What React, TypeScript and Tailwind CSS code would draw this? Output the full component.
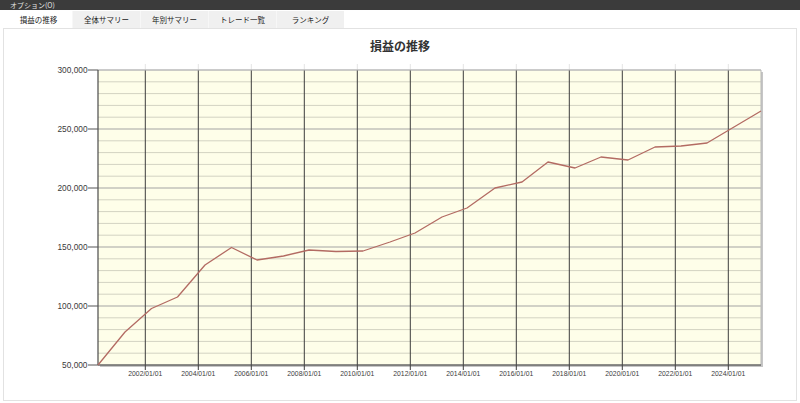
import * as React from 'react';

const tabs = ['損益の推移', '全体サマリー', '年別サマリー', 'トレード一覧', 'ランキング'];

// plot area in page pixels
const L = 98;
const T = 70;
const R = 761;
const B = 365;

const yOf = (v: number) => B - ((v - 50000) / 250000) * (B - T);

const yLabels = [300000, 250000, 200000, 150000, 100000, 50000];
const years = ['2002', '2004', '2006', '2008', '2010', '2012', '2014', '2016', '2018', '2020', '2022', '2024'];
const xOfYear = (i: number) => 145.3 + 53 * i;

const points: Array<[number, number]> = [
  [98, 365], [125, 332], [151.5, 308.5], [177.5, 297], [205, 265], [231.5, 247.5],
  [257, 260], [283.5, 256], [309, 250], [336, 251.5], [363, 251], [390, 242],
  [415, 233], [442, 217], [467, 208], [495, 188], [522, 182], [548, 162],
  [575, 168], [601, 157], [628, 160], [655, 147], [681, 146], [707, 143],
  [734, 127], [761, 111],
];

const axisFont = '"Liberation Sans", Arial, sans-serif';

function ProfitChart() {
  const minor = Array.from({ length: 26 }, (_, k) => 50000 + k * 10000);
  return (
    <svg width={792} height={337} viewBox="4 58 792 337" className="block">
      {/* shadow */}
      <rect x={L + 2} y={T + 2} width={R - L} height={B - T} fill="#c6c6c6" />
      <rect x={L} y={T} width={R - L} height={B - T} fill="#fefee9" />

      {/* faint top ticks */}
      {years.map((_, i) => (
        <line key={'tt' + i} x1={xOfYear(i)} x2={xOfYear(i)} y1={T - 6} y2={T} stroke="#e4e4e4" strokeWidth={1} />
      ))}

      {/* minor horizontal grid */}
      {minor.map((v) =>
        v % 50000 === 0 ? null : (
          <line key={'m' + v} x1={L} x2={R} y1={yOf(v)} y2={yOf(v)} stroke="#d3d3c2" strokeWidth={1} />
        )
      )}
      {/* major horizontal grid */}
      {yLabels.map((v) => (
        <line key={'M' + v} x1={L} x2={R} y1={yOf(v)} y2={yOf(v)} stroke="#a4a4a4" strokeWidth={1.2} />
      ))}

      {/* vertical grid */}
      {years.map((_, i) => (
        <line key={'v' + i} x1={xOfYear(i)} x2={xOfYear(i)} y1={T} y2={B + 5} stroke="#3c3c3c" strokeWidth={1} />
      ))}

      {/* frame */}
      <line x1={L} x2={R} y1={T} y2={T} stroke="#c4c4c4" strokeWidth={1} />
      <line x1={R} x2={R} y1={T} y2={B} stroke="#b8b8b8" strokeWidth={1} />
      <line x1={L} x2={L} y1={T} y2={B} stroke="#4a4a4a" strokeWidth={1.2} />
      <line x1={L} x2={R} y1={B} y2={B} stroke="#4a4a4a" strokeWidth={1.2} />

      {/* y ticks and labels */}
      {yLabels.map((v) => (
        <g key={'yl' + v}>
          <line x1={L - 10} x2={L} y1={yOf(v)} y2={yOf(v)} stroke="#555" strokeWidth={1} />
          <text
            x={L - 10.5}
            y={yOf(v) + 3}
            textAnchor="end"
            fontSize={8.3}
            fill="#3a3a3a"
            fontFamily={axisFont}
          >
            {v.toLocaleString('en-US')}
          </text>
        </g>
      ))}

      {/* x labels */}
      {years.map((y, i) => (
        <text
          key={'xl' + y}
          x={xOfYear(i)}
          y={376}
          textAnchor="middle"
          fontSize={7.5}
          fill="#3a3a3a"
          fontFamily={axisFont}
          textLength={34}
          lengthAdjust="spacingAndGlyphs"
        >
          {y}/01/01
        </text>
      ))}

      {/* data line */}
      <polyline
        points={points.map((p) => p.join(',')).join(' ')}
        fill="none"
        stroke="#b36b63"
        strokeWidth={1.3}
        strokeLinejoin="round"
      />
    </svg>
  );
}

export default function App() {
  const [active, setActive] = React.useState(0);
  return (
    <div
      className="w-[800px] h-[403px] bg-white overflow-hidden text-[#222]"
      style={{ fontFamily: '"Noto Sans CJK JP", "Noto Sans", sans-serif' }}
    >
      <div className="h-[10px] bg-[#3b3b3b] pl-[10px] text-[7px] leading-[10px] text-[#e4e4e4]">
        オプション(O)
      </div>
      <div className="mt-[1px] h-[17px] flex pl-[5px]">
        {tabs.map((t, i) => (
          <button
            key={t}
            onClick={() => setActive(i)}
            className={
              i === active
                ? 'w-[67px] h-full flex items-center justify-center bg-white text-[7.5px] text-[#1a1a1a]'
                : 'w-[68px] h-full flex items-center justify-center bg-[#f0f0f0] border-l border-[#f7f7f7] text-[7.5px] text-[#1a1a1a]'
            }
          >
            {t}
          </button>
        ))}
      </div>
      <div className="mx-[3px] h-[373px] border border-[#e2e2e2] bg-white flex flex-col">
        <div className="h-[29px] pt-[5px] flex items-center justify-center text-[12px] font-bold text-[#333]">
          損益の推移
        </div>
        <ProfitChart />
      </div>
    </div>
  );
}
